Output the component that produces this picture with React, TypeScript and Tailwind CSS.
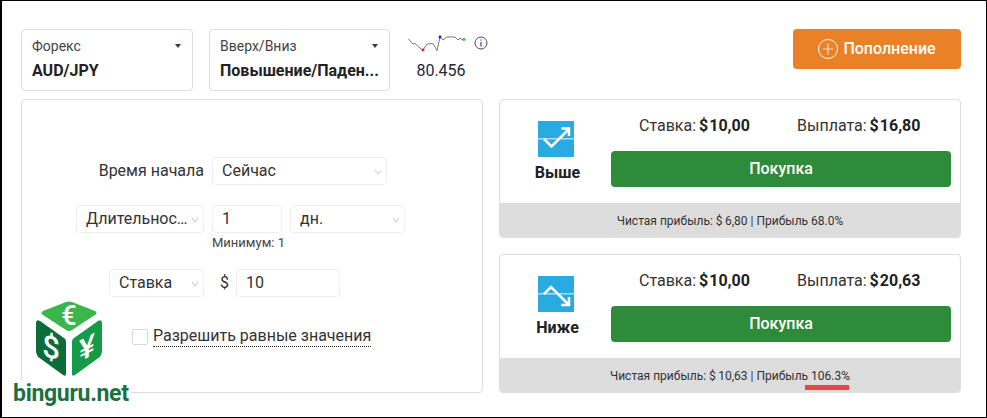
function Field({ className, children, chevron }: { className: string; children: React.ReactNode; chevron?: boolean }) {
  return (
    <div className={`flex h-[28px] items-center rounded-[4px] border border-[#eeeeee] bg-white text-[16px] text-[#333333] ${className}`}>
      <span className="flex-1 truncate whitespace-nowrap">{children}</span>
      {chevron && (
        <svg width="8" height="6" viewBox="0 0 8 6" className="ml-[2px] mt-[2px] shrink-0">
          <path d="M1 1l3 4 3-4" fill="none" stroke="#c4c8cc" strokeWidth="1" />
        </svg>
      )}
    </div>
  )
}

function TopSelect({ className, label, value }: { className: string; label: string; value: string }) {
  return (
    <div className={`relative h-[62px] rounded-[4px] border border-[#dddddd] bg-white pl-[10px] pr-[10px] pt-[8px] ${className}`}>
      <div className="text-[14px] leading-[17px] text-[#444444]">{label}</div>
      <div className="mt-[6px] truncate text-[16px] font-bold leading-[20px] text-[#222222]">{value}</div>
      <span className="absolute right-[11px] top-[14px] h-0 w-0 border-x-[3.5px] border-t-[4px] border-x-transparent border-t-[#333a56]" />
    </div>
  )
}

function TradeIcon({ up }: { up: boolean }) {
  return (
    <svg width="36" height="36" viewBox="0 0 36 36">
      <rect width="36" height="36" fill="#29abe2" />
      <rect y="17" width="36" height="1.5" fill="#a9def5" />
      {up ? (
        <path d="M6 18l7.500 7.500L31 8M23.500 7.500H31V15" fill="none" stroke="#ffffff" strokeWidth="2.500" />
      ) : (
        <path d="M6 18l7-7L31 29M31 21v8h-8" fill="none" stroke="#ffffff" strokeWidth="2.500" />
      )}
    </svg>
  )
}

function Money({ value }: { value: string }) {
  return (
    <b className="ml-[3px] text-[#222222]">
      <span className="mr-[1px]">$</span>
      {value}
    </b>
  )
}

type CardProps = { up: boolean; title: string; payout: string; profit: string; percent: string }

function TradeCard({ up, title, payout, profit, percent }: CardProps) {
  return (
    <div className="h-[139px] overflow-hidden rounded-[4px] border border-[#dddddd] bg-white">
      <div className="flex h-[103px]">
        <div className="flex w-[111px] flex-col items-center pt-[21px]">
          <TradeIcon up={up} />
          <div className="ml-[4px] mt-[5px] text-[16px] font-bold leading-[22px] text-[#222222]">{title}</div>
        </div>
        <div className="w-[340px]">
          <div className="flex h-[51px] items-center pl-[28px] text-[16px] text-[#333333]">
            <span className="w-[158px]">
              Ставка:<Money value="10,00" />
            </span>
            <span>
              Выплата:<Money value={payout} />
            </span>
          </div>
          <button className="h-[36px] w-full rounded-[4px] bg-[#2e8b3a] text-[16px] font-medium text-white">Покупка</button>
        </div>
      </div>
      <div className="flex h-[35px] items-center justify-center bg-[#dddddd] text-[12px] text-[#333333]">
        Чистая прибыль: {'$\u2009'}{profit} | Прибыль {percent}
      </div>
    </div>
  )
}

function Logo() {
  return (
    <div className="absolute left-[9px] top-[300px] w-[118px]">
      <svg width="68" height="76" viewBox="0 0 68 76" className="ml-[25px]">
        <path d="M30 1Q33 0 36 1L59 10Q62 12 59 14L36 29Q33 31 30 29L7 14Q4 12 7 10Z" fill="#3cb54a" />
        <text x="33" y="24" textAnchor="middle" fontSize="27" fontWeight="500" fill="#ffffff" fontFamily="Roboto, sans-serif">€</text>
        <path d="M0 22Q0 18 4 20L28 37Q30 38 30 41V73Q30 76 27 74L5 58Q0 55 0 50Z" fill="#0b6b39" />
        <text x="0" y="0" textAnchor="middle" fontSize="31" fontWeight="500" fill="#ffffff" fontFamily="Roboto, sans-serif" transform="translate(15,57) skewY(12)">$</text>
        <path d="M66 22Q66 18 62 20L38 37Q36 38 36 41V73Q36 76 39 74L61 58Q66 55 66 50Z" fill="#159a48" />
        <text x="0" y="0" textAnchor="middle" fontSize="30" fontWeight="500" fill="#ffffff" fontFamily="Roboto, sans-serif" transform="translate(51,57) skewY(-28)">¥</text>
      </svg>
      <div className="mt-[4px] w-fit bg-white px-[2px] font-['Roboto',sans-serif] text-[23px] font-bold leading-[25px] tracking-[-0.3px] text-[#1c7142]">binguru.net</div>
    </div>
  )
}

export default function App() {
  return (
    <div className="relative h-[418px] w-[987px] overflow-hidden border-y border-l-2 border-r border-black bg-white font-['Roboto',sans-serif]">
      <div className="flex pl-[19px] pr-[25px] pt-[28px]">
        <TopSelect className="w-[172px]" label="Форекс" value="AUD/JPY" />
        <TopSelect className="ml-[16px] w-[181px]" label="Вверх/Вниз" value="Повышение/Паден..." />
        <div className="ml-[18px] w-[82px]">
          <div className="flex h-[28px] items-start">
            <svg width="60" height="20" viewBox="0 0 60 20" className="mt-[4px] shrink-0">
              <path d="M0.500 6L5 11 7 10.500 13 16 15 17 19 11 25 10.500 29 17.500 32 4 35 7 39 4 47 4 50 7 52 5 55 7 56 6.500" fill="none" stroke="#555555" strokeWidth="0.800" />
              <circle cx="15" cy="17" r="1.400" fill="#e02020" />
              <circle cx="32" cy="4" r="1.400" fill="#1a1ae0" />
              <circle cx="56" cy="6.500" r="1.400" fill="#22d022" />
            </svg>
            <svg width="14" height="14" viewBox="0 0 14 14" className="ml-[6px] mt-[7px] shrink-0">
              <circle cx="7" cy="7" r="6" fill="none" stroke="#45496a" strokeWidth="1" />
              <path d="M7 6v4.500M7 3.500v1.200" stroke="#45496a" strokeWidth="1.200" />
            </svg>
          </div>
          <div className="mt-[4px] w-[66px] text-center text-[16px] leading-[20px] text-[#22283c]">80.456</div>
        </div>
        <button className="ml-auto flex h-[40px] w-[168px] items-center justify-center rounded-[4px] bg-[#ea8126] text-[16px] font-medium text-white">
          <svg width="20" height="20" viewBox="0 0 20 20" className="mr-[5px]">
            <circle cx="10" cy="10" r="9.500" fill="none" stroke="#ffffff" strokeWidth="1" />
            <path d="M10 4.500v11M4.500 10h11" stroke="#ffffff" strokeOpacity="0.700" strokeWidth="1.200" />
          </svg>
          Пополнение
        </button>
      </div>

      <div className="mt-[8px] flex gap-[16px] pl-[19px] pr-[25px]">
        <div className="h-[294px] w-[462px] rounded-[4px] border border-[#dddddd] bg-white pt-[57px]">
          <div className="flex items-center">
            <div className="w-[182px] text-right text-[16px] text-[#333333]">Время начала</div>
            <Field className="ml-[8px] w-[175px] pl-[9px] pr-[4px]" chevron>Сейчас</Field>
          </div>
          <div className="mt-[20px] flex">
            <div className="flex w-[182px] justify-end">
              <Field className="w-[128px] pl-[9px] pr-[4px]" chevron>Длительнос...</Field>
            </div>
            <div className="ml-[8px] w-[70px]">
              <Field className="w-[70px] pl-[9px]">1</Field>
              <div className="mt-[2px] whitespace-nowrap text-[13px] leading-[16px] text-[#444444]">Минимум: 1</div>
            </div>
            <Field className="ml-[8px] w-[115px] pl-[9px] pr-[4px]" chevron>дн.</Field>
          </div>
          <div className="mt-[18px] flex items-center">
            <div className="flex w-[182px] justify-end">
              <Field className="w-[95px] pl-[9px] pr-[4px]" chevron>Ставка</Field>
            </div>
            <span className="ml-[16px] w-[16px] text-[16px] text-[#333333]">$</span>
            <Field className="w-[104px] pl-[9px]">10</Field>
          </div>
          <div className="ml-[110px] mt-[29px] flex items-center">
            <span className="h-[16px] w-[16px] rounded-[2px] border border-[#d8d8d8] bg-white" />
            <span className="ml-[5px] border-b border-dotted border-[#222222] text-[16px] leading-[20px] text-[#333333]">Разрешить равные значения</span>
          </div>
        </div>

        <div className="flex w-[462px] flex-col gap-[16px]">
          <TradeCard up title="Выше" payout="16,80" profit="6,80" percent="68.0%" />
          <TradeCard up={false} title="Ниже" payout="20,63" profit="10,63" percent="106.3%" />
        </div>
      </div>

      <div className="absolute left-[803px] top-[384px] h-[5px] w-[44px] bg-[#e8473f]" />
      <Logo />
    </div>
  )
}
